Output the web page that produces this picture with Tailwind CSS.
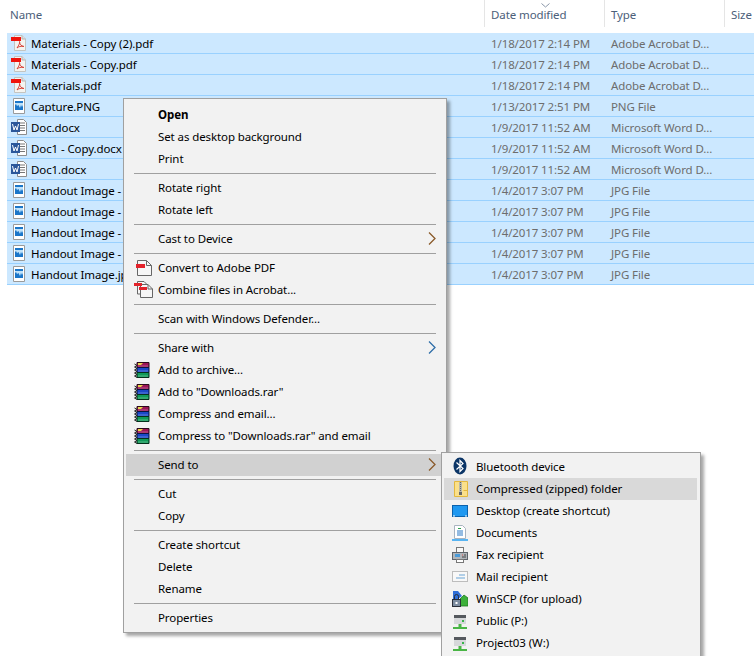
<!DOCTYPE html>
<html><head><meta charset="utf-8"><script src="https://cdn.jsdelivr.net/npm/@tailwindcss/browser@4"></script></head>
<body class="bg-white">
<svg class="hidden" width="0" height="0">
<symbol id="pdf" viewBox="0 0 16 16"><path d="M3.500 .5H11L14.500 4V15.500H3.500Z" fill="#f4f4f0" stroke="#c4c4c0"/><path d="M11 .5V4H14.500" fill="#ddd" stroke="#b5b5b5"/><rect x="0" y="2" width="10" height="4" fill="#f0140c"/><path d="M6 13C8 10 9 8 8.500 6.500 8.500 9 10 11 13 11.500 10 11 7.500 11.500 6 13Z" fill="none" stroke="#d8453a" stroke-width="1"/></symbol>
<symbol id="img" viewBox="0 0 16 16"><path d="M2.500 .5H13.500V15.500H2.500Z" fill="#fff" stroke="#9a9a9a"/><rect x="4" y="3" width="8" height="9" fill="#1b76c9"/><path d="M4 5H12V7L11 9 10 7 9 10 7.500 7 6 8 5 6 4 7Z" fill="#bfe2fa"/></symbol>
<symbol id="doc" viewBox="0 0 16 16"><path d="M6.500 .5H12.500L15.500 3.500V15.500H6.500Z" fill="#fff" stroke="#8c8c8c"/><path d="M9 4H14M9 6.500H14M9 9H14M9 11.500H14" stroke="#777" stroke-width="1"/><rect x="0" y="3" width="9" height="10" fill="#2b579a"/><path d="M1.500 5 3 11 4.500 7 6 11 7.500 5" fill="none" stroke="#fff" stroke-width="1"/></symbol>
<symbol id="rar" viewBox="0 0 16 16"><path d="M3 .5H15V5.500H3Z" fill="#9c1458" stroke="#2a0a1a"/><path d="M3 5.500H15V10.500H3Z" fill="#1a48c8" stroke="#0a1440"/><path d="M3 10.500H15V15.500H3Z" fill="#0f9a58" stroke="#04301c"/><path d="M4 1H9L7 3H4Z" fill="#e8d84a"/><path d="M4 4H14M4 9H14M4 14H14" stroke="#fff" stroke-opacity=".3"/><path d="M.5 2 3 3.500 .5 5 3 6.500 .5 8 3 9.500 .5 11 3 12.500 .5 14 3 15.500" fill="none" stroke="#222" stroke-width="1"/></symbol>
<symbol id="chev" viewBox="0 0 8 13"><path d="M1 .5 7 6.500 1 12.500" fill="none" stroke="currentColor" stroke-width="1.300"/></symbol>
<symbol id="net" viewBox="0 0 16 16"><rect x="2" y="2" width="12" height="3" fill="#55595e"/><rect x="2" y="5" width="12" height="6" fill="#d6d8da"/><rect x="10" y="7" width="2" height="2" fill="#39b54a"/><rect x="6.500" y="11" width="3" height="3" fill="#49b545"/><rect x="1" y="14" width="14" height="2" fill="#49b545"/></symbol>
</svg>
<div class="relative w-[754px] h-[656px] overflow-hidden text-[11.5px] tracking-[-0.1px] font-['Noto_Sans',sans-serif]">
  <div class="relative flex h-[28px] text-[#4c607a] leading-[30px]">
    <div class="w-[484px] pl-[10px]">Name</div>
    <div class="w-[120px] pl-[6px] border-l border-[#e5e5e5] h-[27px]">Date modified</div>
    <div class="w-[120px] pl-[6px] border-l border-[#e5e5e5] h-[27px]">Type</div>
    <div class="flex-1 pl-[6px] border-l border-[#e5e5e5] h-[27px]">Size</div>
    <svg class="absolute left-[541px] top-[3px]" width="9" height="5" viewBox="0 0 9 5"><path d="M.5 .5 4.500 4 8.500 .5" fill="none" stroke="#8a97a8"/></svg>
  </div>
  <div class="mt-[5px] ml-[7px] text-black leading-[22px] [&>div]:flex [&>div]:items-start [&>div]:h-[21px] [&>div]:bg-[#cce8ff] [&>div]:border-b [&>div]:border-[#99d1ff] [&_svg]:mt-[2px] [&_svg]:ml-[4px] [&_svg]:mr-[4px] [&_svg]:w-4 [&_svg]:h-4">
    <div><svg><use href="#pdf"/></svg><span class="w-[460px]">Materials - Copy (2).pdf</span><span class="w-[120px] text-[#6d6d6d]">1/18/2017 2:14 PM</span><span class="text-[#6d6d6d]">Adobe Acrobat D...</span></div>
    <div><svg><use href="#pdf"/></svg><span class="w-[460px]">Materials - Copy.pdf</span><span class="w-[120px] text-[#6d6d6d]">1/18/2017 2:14 PM</span><span class="text-[#6d6d6d]">Adobe Acrobat D...</span></div>
    <div><svg><use href="#pdf"/></svg><span class="w-[460px]">Materials.pdf</span><span class="w-[120px] text-[#6d6d6d]">1/18/2017 2:14 PM</span><span class="text-[#6d6d6d]">Adobe Acrobat D...</span></div>
    <div><svg><use href="#img"/></svg><span class="w-[460px]">Capture.PNG</span><span class="w-[120px] text-[#6d6d6d]">1/13/2017 2:51 PM</span><span class="text-[#6d6d6d]">PNG File</span></div>
    <div><svg><use href="#doc"/></svg><span class="w-[460px]">Doc.docx</span><span class="w-[120px] text-[#6d6d6d]">1/9/2017 11:52 AM</span><span class="text-[#6d6d6d]">Microsoft Word D...</span></div>
    <div><svg><use href="#doc"/></svg><span class="w-[460px]">Doc1 - Copy.docx</span><span class="w-[120px] text-[#6d6d6d]">1/9/2017 11:52 AM</span><span class="text-[#6d6d6d]">Microsoft Word D...</span></div>
    <div><svg><use href="#doc"/></svg><span class="w-[460px]">Doc1.docx</span><span class="w-[120px] text-[#6d6d6d]">1/9/2017 11:52 AM</span><span class="text-[#6d6d6d]">Microsoft Word D...</span></div>
    <div><svg><use href="#img"/></svg><span class="w-[460px]">Handout Image -</span><span class="w-[120px] text-[#6d6d6d]">1/4/2017 3:07 PM</span><span class="text-[#6d6d6d]">JPG File</span></div>
    <div><svg><use href="#img"/></svg><span class="w-[460px]">Handout Image -</span><span class="w-[120px] text-[#6d6d6d]">1/4/2017 3:07 PM</span><span class="text-[#6d6d6d]">JPG File</span></div>
    <div><svg><use href="#img"/></svg><span class="w-[460px]">Handout Image -</span><span class="w-[120px] text-[#6d6d6d]">1/4/2017 3:07 PM</span><span class="text-[#6d6d6d]">JPG File</span></div>
    <div><svg><use href="#img"/></svg><span class="w-[460px]">Handout Image -</span><span class="w-[120px] text-[#6d6d6d]">1/4/2017 3:07 PM</span><span class="text-[#6d6d6d]">JPG File</span></div>
    <div><svg><use href="#img"/></svg><span class="w-[460px]">Handout Image.jpg</span><span class="w-[120px] text-[#6d6d6d]">1/4/2017 3:07 PM</span><span class="text-[#6d6d6d]">JPG File</span></div>
  </div>

  <div class="absolute left-[123px] top-[98px] w-[324px] h-[535px] bg-[#f2f2f2] border border-[#a0a0a0] shadow-[3px_3px_3px_rgba(0,0,0,0.35)] pt-[5px] pl-[2px] pr-[2px] text-black [&>div]:relative [&>div]:h-[22px] [&>div]:leading-[21px] [&>div]:pl-[32px] [&>hr]:mx-[8px] [&>hr]:my-[3px] [&>hr]:border-[#a0a0a0]">
    <div class="font-bold">Open</div>
    <div>Set as desktop background</div>
    <div>Print</div>
    <hr>
    <div>Rotate right</div>
    <div>Rotate left</div>
    <hr>
    <div>Cast to Device<svg class="absolute left-[302px] top-[4px] w-2 h-[13px] text-[#8a5a2a]"><use href="#chev"/></svg></div>
    <hr>
    <div><svg class="absolute left-[10px] top-[3px]" width="16" height="16" viewBox="0 0 16 16"><path d="M1.500 .5H10.500L15.500 5.500V15.500H1.500Z" fill="#f6f6f6" stroke="#666"/><path d="M10.500 .5V5.500H15.500" fill="none" stroke="#666"/><rect x="0" y="4" width="9" height="4" fill="#e3222a"/></svg>Convert to Adobe PDF</div>
    <div><svg class="absolute left-[8px] top-[2px]" width="20" height="18" viewBox="0 0 20 18"><path d="M3.500 .5H10L13.500 4V13H3.500Z" fill="#f6f6f6" stroke="#666"/><path d="M6.500 3.500H14L18.500 8V16.500H6.500Z" fill="#f6f6f6" stroke="#666"/><path d="M14 3.500V8H18.500" fill="none" stroke="#666"/><rect x="0" y="2" width="8" height="3" fill="#e3222a"/><rect x="5" y="6" width="8" height="3" fill="#e3222a"/></svg>Combine files in Acrobat...</div>
    <hr>
    <div>Scan with Windows Defender...</div>
    <hr>
    <div>Share with<svg class="absolute left-[302px] top-[4px] w-2 h-[13px] text-[#2f6ea8]"><use href="#chev"/></svg></div>
    <div><svg class="absolute left-[8px] top-[3px] w-4 h-4"><use href="#rar"/></svg>Add to archive...</div>
    <div><svg class="absolute left-[8px] top-[3px] w-4 h-4"><use href="#rar"/></svg>Add to "Downloads.rar"</div>
    <div><svg class="absolute left-[8px] top-[3px] w-4 h-4"><use href="#rar"/></svg>Compress and email...</div>
    <div><svg class="absolute left-[8px] top-[3px] w-4 h-4"><use href="#rar"/></svg>Compress to "Downloads.rar" and email</div>
    <hr>
    <div class="bg-[#d1d1d1]">Send to<svg class="absolute left-[302px] top-[4px] w-2 h-[13px] text-[#8a5a2a]"><use href="#chev"/></svg></div>
    <hr>
    <div>Cut</div>
    <div>Copy</div>
    <hr>
    <div>Create shortcut</div>
    <div>Delete</div>
    <div>Rename</div>
    <hr>
    <div>Properties</div>
  </div>

  <div class="absolute left-[441px] top-[452px] w-[260px] h-[220px] bg-[#f2f2f2] border border-[#a0a0a0] shadow-[3px_3px_3px_rgba(0,0,0,0.35)] pt-[3px] pl-[2px] pr-[3px] text-black [&>div]:relative [&>div]:h-[22px] [&>div]:leading-[21px] [&>div]:pl-[32px]">
    <div><svg class="absolute left-[9px] top-[1px]" width="14" height="18" viewBox="0 0 14 18"><ellipse cx="7" cy="9" rx="6.500" ry="8.500" fill="#0b3567"/><path d="M3.500 5.500 10 11.500 7 14.500V3.500L10 6.500 3.500 12.500" fill="none" stroke="#fff" stroke-width="1.200"/></svg>Bluetooth device</div>
    <div class="bg-[#d9d9d9]"><svg class="absolute left-[10px] top-[3px]" width="14" height="16" viewBox="0 0 14 16"><path d="M.5 .5H13.500V15.500H.5Z" fill="#fbe08a" stroke="#e3b83e"/><rect x="5" y="1" width="3" height="11" fill="#b8b8a8"/><path d="M6.500 1V11" stroke="#666" stroke-dasharray="1 1"/><rect x="5" y="11" width="3" height="3" fill="#666"/><path d="M9.500 9.500H13.500" stroke="#e3b83e"/></svg>Compressed (zipped) folder</div>
    <div><svg class="absolute left-[8px] top-[5px]" width="16" height="12" viewBox="0 0 16 12"><rect x=".5" y=".5" width="15" height="11" fill="#1f98f0" stroke="#0b62ad"/><path d="M1 11H3M13 11H15" stroke="#fff"/></svg>Desktop (create shortcut)</div>
    <div><svg class="absolute left-[8px] top-[3px]" width="16" height="16" viewBox="0 0 16 16"><path d="M2.500 .5H10.500L13.500 3.500V13.500H2.500Z" fill="#fff" stroke="#a9b4c0"/><path d="M5 6H11M5 8H11M5 10H11" stroke="#2b78c5"/><path d="M6 3.500H9" stroke="#2aa04a"/><path d="M0 15H16" stroke="#58b4f2" stroke-width="2"/></svg>Documents</div>
    <div><svg class="absolute left-[8px] top-[3px]" width="16" height="16" viewBox="0 0 16 16"><rect x="4.500" y=".5" width="7" height="5" fill="#f8f8f8" stroke="#777"/><rect x=".5" y="5.500" width="15" height="7" fill="#b0b5ba" stroke="#5d636a"/><rect x="3" y="7" width="5" height="3" fill="#4a9ad8"/><path d="M10 8H11" stroke="#d9534f"/><path d="M12 8H14M10 10H14" stroke="#444"/><rect x="4.500" y="12.500" width="7" height="3" fill="#fff" stroke="#777"/></svg>Fax recipient</div>
    <div><svg class="absolute left-[8px] top-[5px]" width="16" height="11" viewBox="0 0 16 11"><rect x=".5" y=".5" width="15" height="10" fill="#f8f8f8" stroke="#bdbdbd"/><path d="M7 4H13M4 7H13" stroke="#6aa5d6"/></svg>Mail recipient</div>
    <div><svg class="absolute left-[8px] top-[3px]" width="16" height="16" viewBox="0 0 16 16"><path d="M1 0H6L10 5 6 8H1Z" fill="#2f6fd8"/><path d="M7 9 12 4 16 7V15H7Z" fill="#3db03a" stroke="#1f7a1e" stroke-width=".8"/><rect x=".5" y="8.500" width="8" height="7" fill="#7d8da0" stroke="#2a2f38"/><path d="M2.500 8V5.500A2 2 0 0 1 6.500 5.500V8" fill="none" stroke="#2a2f38"/><rect x="3.500" y="11" width="2" height="2" fill="#fff"/></svg>WinSCP (for upload)</div>
    <div><svg class="absolute left-[8px] top-[3px] w-4 h-4"><use href="#net"/></svg>Public (P:)</div>
    <div><svg class="absolute left-[8px] top-[3px] w-4 h-4"><use href="#net"/></svg>Project03 (W:)</div>
  </div>
</div>
</body></html>
